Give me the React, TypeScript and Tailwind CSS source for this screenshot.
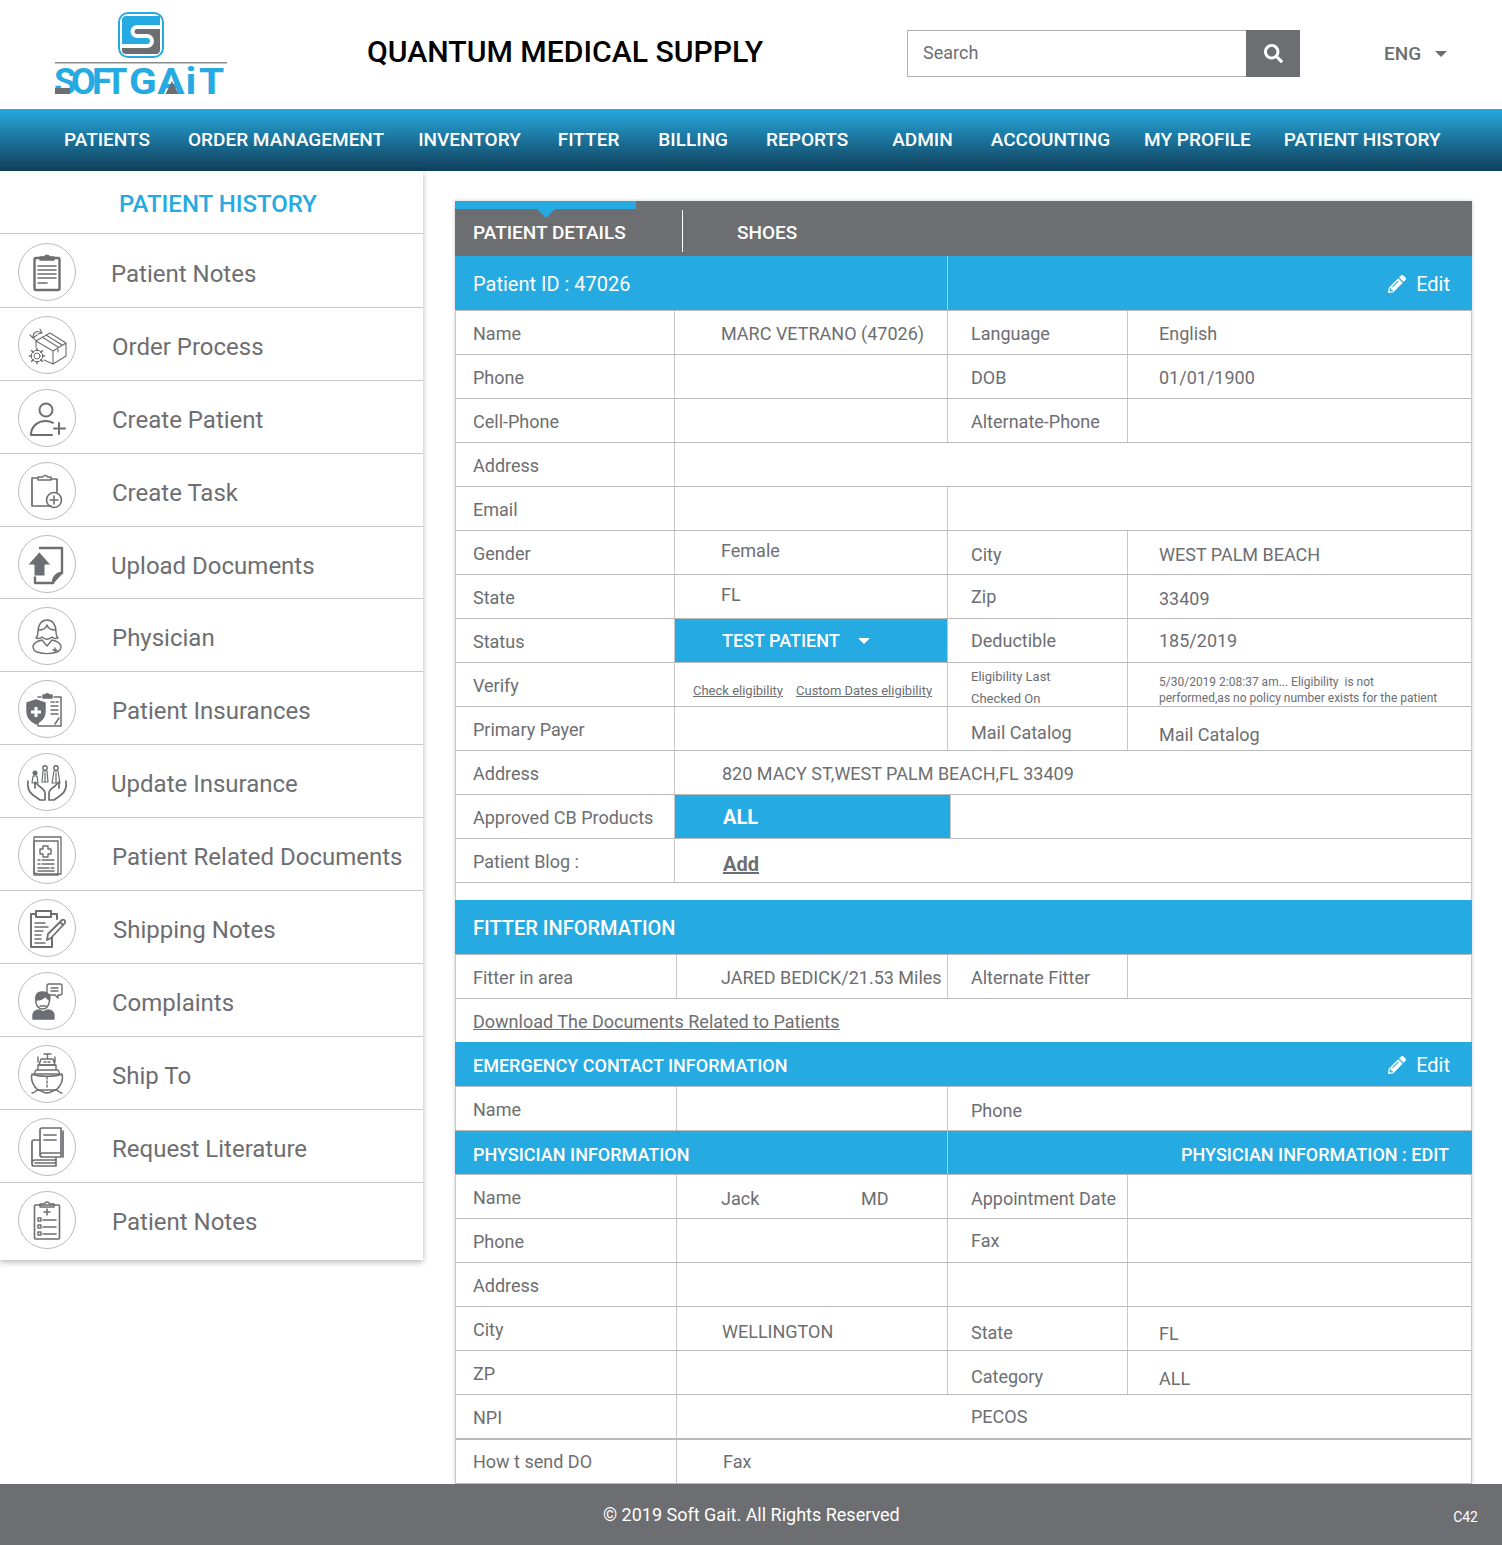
import React from "react";
import { FaSearch, FaPencilAlt } from "react-icons/fa";

const G = "#6d6e71";

function Ico({ children }: { children: React.ReactNode }) {
  return (
    <svg viewBox="0 0 58 58" className="w-[58px] h-[58px] shrink-0 -m-px" fill="none" stroke={G} strokeWidth="1.4" strokeLinejoin="round" strokeLinecap="round">
      {children}
    </svg>
  );
}

const icons: React.ReactNode[] = [
  <Ico>
    <rect x="16.5" y="15" width="25" height="32" rx="1.5" strokeWidth="2.4" />
    <path d="M22 17v-3h4.5a2.6 2.6 0 0 1 5 0H36v3z" fill={G} />
    <path d="M20 23h18M20 27h18M20 31h18M20 35h18M20 40h9" strokeWidth="1.6" />
  </Ico>,
  <Ico>
    <path d="M18 25l14-8 16 10-13 8zM18 25v6M35 35v13l13-8V27M24 21l16 10v5M28 19l16 10M26 44l9 4" strokeWidth="1.1" />
    <path d="M23 17c-3-3-8-1-8 4l3 4M15 22l-3-3M15 22l4-3M22 13l2 4-4 1" strokeWidth="1.1" />
    <circle cx="19" cy="40" r="3" strokeWidth="1" fill="#fff" />
    <path d="M19 32.500v2M19 45.500v2M11.500 40h2M24.500 40h2M13.700 34.700l1.500 1.500M22.800 43.800l1.500 1.500M24.300 34.700l-1.500 1.500M15.200 43.800l-1.500 1.500" strokeWidth="1.6" />
    <circle cx="19" cy="40" r="5.800" strokeWidth="1" />
  </Ico>,
  <Ico>
    <circle cx="28" cy="21" r="6.500" strokeWidth="2" />
    <path d="M13 46c0-9 7-14 15-14 3 0 5 .6 7 1.800M13 46h21M41 34v11M36 39.500h11" strokeWidth="2" />
  </Ico>,
  <Ico>
    <path d="M20 16h-6v28h19M33 17h6v13" strokeWidth="1.700" />
    <path d="M20 18v-3h5a2.400 2.400 0 0 1 4.500 0H33v3z" />
    <circle cx="36" cy="38" r="7.500" strokeWidth="1.600" />
    <path d="M36 34v8M32 38h8" strokeWidth="1.600" />
  </Ico>,
  <Ico>
    <path d="M22 13h22v25c-5 0-9 4-9 10H17v-7" strokeWidth="2.400" />
    <path d="M44 38l-9 10c0-5 3-9 9-10z" fill={G} />
    <path d="M21.500 17L33 30h-6v11H16V30h-6z" fill={G} stroke="#fff" strokeWidth="1" />
  </Ico>,
  <Ico>
    <path d="M20 25c0-8 4-12 9-12s9 4 9 12c0 3 1 5 2 6-3 1-5 0-6-1-3 3-7 3-10 0-1 1-3 2-6 1 1-1 2-3 2-6z" />
    <path d="M21 23c4 0 7-2 8-5 1 3 4 5 8 5" />
    <path d="M24 33c-5 1-8 3-9 6 0 3 1 5 4 6 6 2 14 2 20 0 3-1 4-3 4-6-1-3-4-5-9-6l-5 6z" />
    <path d="M37 41v4M35 43h4" />
  </Ico>,
  <Ico>
    <path d="M23 17h-3M36 17h7v29H20v-4M41 38l-4 6M38 22h2M33 22h3M33 26h7M33 30h7M33 34h7" strokeWidth="1.500" />
    <path d="M25 18v-3h2.500a1.800 1.800 0 0 1 3.500 0H34v3z" fill={G} />
    <path d="M18 20l9 3v9c0 6-4 9-9 12-5-3-9-6-9-12v-9z" fill={G} />
    <path d="M18 27v10M13 32h10" stroke="#fff" strokeWidth="3" strokeLinecap="butt" />
  </Ico>,
  <Ico>
    <path d="M10 28c-1 7 1 11 5 14l7 5h5v-7c0-3-3-5-6-7l-4-4v6M48 28c1 7-1 11-5 14l-7 5h-5v-7c0-3 3-5 6-7l4-4v6" strokeWidth="1.700" />
    <circle cx="17" cy="20" r="1.800" fill={G} /><circle cx="27" cy="15" r="2.200" /><circle cx="38" cy="15" r="2.200" />
    <path d="M14 30l1-7h4l1 7zM24 29l1-11h4l1 11zM34 30l2-12h4l2 12zM27 20v9M38 20v10" strokeWidth="1.200" />
  </Ico>,
  <Ico>
    <path d="M16 17V11h27v37H20l-4-1z" strokeWidth="1.300" />
    <rect x="16" y="15" width="24" height="34" strokeWidth="1.400" />
    <path d="M25 20h5v3h3v5h-3v3h-5v-3h-3v-5h3z" />
    <path d="M20 34h2M24 34h12M20 38h2M24 38h12M20 42h11M33 42h3M20 45h16" strokeWidth="1.400" />
  </Ico>,
  <Ico>
    <path d="M34 35v13H13V15h26v5" strokeWidth="2" />
    <rect x="18" y="12" width="15" height="6" strokeWidth="2" fill="#fff" />
    <path d="M17 24h10M17 28h13M17 32h8M17 36h6M17 40h6M17 44h10" strokeWidth="1.500" />
    <path d="M29 41l1-6 14-14c2-1 4 1 3 3L33 39zM42 23l3 3" strokeWidth="1.800" fill="#fff" />
  </Ico>,
  <Ico>
    <path d="M18 31c-1-7 3-10 7-10 5 0 8 4 6 10-1 4-3 6-6 6-4 0-6-2-7-6z" />
    <path d="M18 28c3 0 7-1 9-4 1 2 3 3 4 4l1-3c-1-3-4-5-8-5-5 0-7 4-6 8z" fill={G} />
    <path d="M22 34h6" />
    <path d="M15 47v-4c0-3 3-5 6-5l4 2 5-2c3 0 6 2 6 5v4z" fill={G} />
    <path d="M31 12h11a2 2 0 0 1 2 2v7a2 2 0 0 1-2 2h-2v3l-3-3h-6a2 2 0 0 1-2-2v-7a2 2 0 0 1 2-2zM33 16h7M33 19h7" />
  </Ico>,
  <Ico>
    <path d="M26 9h7M29.500 9v5M20 12v5M37 12v5M23 14h12l2 6H21zM26 17h2M30 17h2" />
    <path d="M20 20h18v5H20zM18 25h22l2 4H16z" />
    <path d="M14 29c6 3 24 3 30 0 2 6-2 13-6 16H20c-4-3-8-10-6-16zM29 32v2M29 36v2M29 40v2" />
    <path d="M14 48c3 0 4-3 6-3 3 0 4 3 9 3s6-3 9-3c2 0 3 3 6 3" />
  </Ico>,
  <Ico>
    <path d="M22 37V12a2 2 0 0 1 2-2h19v29H25c-2 0-3-1-3-2zM22 37c0-1 1-2 3-2h18M26 17h12M26 22h12M45 13v26" strokeWidth="1.700" />
    <path d="M22 22h-6c-1 0-2 1-2 2v22c0 1 1 2 2 2h22v-8M14 45c0-1 1-3 3-3h20M17 45h20M38 42v-2" strokeWidth="1.700" />
  </Ico>,
  <Ico>
    <rect x="16.500" y="14" width="25" height="34" rx="1" strokeWidth="1.600" />
    <path d="M22 16v-3h4.500a2.600 2.600 0 0 1 5 0H36v3zM29 18v6M26 21h6" strokeWidth="1.500" />
    <rect x="20" y="27" width="3" height="3" /><rect x="20" y="34" width="3" height="3" /><rect x="20" y="41" width="3" height="3" />
    <path d="M25 29h13M25 36h13M25 43h13" strokeWidth="1.500" />
  </Ico>,
];

const side: [string, string][] = [
  ["Patient Notes", "ml-[35px]"],
  ["Order Process", "ml-[36px]"],
  ["Create Patient", "ml-[36px]"],
  ["Create Task", "ml-[36px]"],
  ["Upload Documents", "ml-[35px]"],
  ["Physician", "ml-[36px]"],
  ["Patient Insurances", "ml-[36px]"],
  ["Update Insurance", "ml-[35px]"],
  ["Patient Related Documents", "ml-[36px]"],
  ["Shipping Notes", "ml-[37px]"],
  ["Complaints", "ml-[36px]"],
  ["Ship To", "ml-[36px]"],
  ["Request Literature", "ml-[36px]"],
  ["Patient Notes", "ml-[36px]"],
];

const nav: [string, string][] = [
  ["PATIENTS", "ml-[64px]"],
  ["ORDER MANAGEMENT", "ml-[38px]"],
  ["INVENTORY", "ml-[34px]"],
  ["FITTER", "ml-[37px]"],
  ["BILLING", "ml-[39px]"],
  ["REPORTS", "ml-[38px]"],
  ["ADMIN", "ml-[44px]"],
  ["ACCOUNTING", "ml-[38px]"],
  ["MY PROFILE", "ml-[34px]"],
  ["PATIENT HISTORY", "ml-[33px]"],
];

function Logo() {
  return (
    <svg viewBox="50 5 180 92" className="w-[180px] h-[92px] shrink-0" fontFamily="Roboto, sans-serif" fontWeight="700" fontSize="36">
      <rect x="119" y="13" width="44" height="44" rx="9" fill="#fff" stroke="#25aae1" strokeWidth="2" />
      <path d="M122 20a4 4 0 0 1 4-4h34v11h-23a4.500 4.500 0 0 0 0 9h10a5 5 0 0 1 0 10h-25z" fill="#25aae1" />
      <path d="M160 27v23a4 4 0 0 1-4 4h-30a4 4 0 0 1-4-4v-4h25a5 5 0 0 0 0-10h-10a4.500 4.500 0 0 1 0-9z" fill={G} />
      <path d="M160 27h-23a4.500 4.500 0 0 0 0 9h10a5 5 0 0 1 0 10h-25" fill="none" stroke="#fff" strokeWidth="4" />
      <rect x="55" y="62" width="172" height="1.500" fill="#8a8b8d" />
      <text x="54 71 92 105" y="94" fill="#25aae1">SOFT</text>
      <text transform="translate(129 94) scale(1.13 1)" x="0 25 50 62" y="0" fill="#25aae1">GAiT</text>
      <rect x="55" y="88" width="15" height="6" fill={G} />
      <path d="M172 81l6.500 13h-13z" fill={G} />
    </svg>
  );
}

type Cell = { t?: React.ReactNode; w?: string; c?: string };

function Row({ cells, last = false }: { cells: Cell[]; last?: boolean }) {
  return (
    <div className={`flex shrink-0 border-[#bababa] ${last ? "h-[46px] border-t-2 border-b" : "h-[44px] border-t"}`}>
      {cells.map((x, i) => (
        <div
          key={i}
          className={`flex min-w-0 whitespace-nowrap ${x.w ?? "flex-1"} ${i < cells.length - 1 ? "border-r border-[#c8c8c8]" : ""} ${x.c ?? ""}`}
        >
          <div className="flex items-center w-full h-full pb-[2px]">{x.t}</div>
        </div>
      ))}
    </div>
  );
}

const A = "w-[219px] pl-[17px] pt-[4px]";
const B = "w-[273px] pl-[46px]";
const C = "w-[180px] pl-[23px]";
const D = "flex-1 pl-[31px]";
const A2 = "w-[221px] pl-[17px] pt-[4px]";
const B2 = "w-[271px] pl-[44px]";

function R4({ a, b, c, d, bc = "pt-[4px]", cc = "pt-[4px]", dc = "pt-[4px]", two }: { a?: React.ReactNode; b?: React.ReactNode; c?: React.ReactNode; d?: React.ReactNode; bc?: string; cc?: string; dc?: string; two?: boolean }) {
  return (
    <Row
      cells={[
        { t: a, w: two ? A2 : A },
        { t: b, w: two ? B2 : B, c: bc },
        { t: c, w: C, c: cc },
        { t: d, w: D, c: dc },
      ]}
    />
  );
}

function Caret({ c }: { c: string }) {
  return <span className={`inline-block w-0 h-0 border-x-[6px] border-x-transparent border-t-[6px] ${c}`} />;
}

function Edit() {
  return (
    <span className="flex items-center gap-[10px] text-[20px] font-normal">
      <FaPencilAlt className="w-[18px] h-[18px]" />
      Edit
    </span>
  );
}

export default function App() {
  return (
    <div className="w-[1502px] h-[1545px] bg-white flex flex-col overflow-hidden font-['Roboto',sans-serif] text-[18px] text-[#6d6e71]">
      <header className="h-[109px] flex items-start pl-[50px] pt-[5px] shrink-0">
        <Logo />
        <h1 className="ml-[137px] mt-[27px] w-[540px] text-[30.2px] leading-[40px] font-medium text-black whitespace-nowrap">QUANTUM MEDICAL SUPPLY</h1>
        <div className="mt-[25px] flex h-[47px] w-[393px]">
          <div className="flex-1 border border-[#b0b0b0] border-r-0 pl-[15px] flex items-center text-[18px] pb-[2px]">Search</div>
          <div className="w-[54px] bg-[#6d6e71] flex items-center justify-center text-white">
            <FaSearch className="w-[19px] h-[19px]" />
          </div>
        </div>
        <div className="ml-[84px] mt-[37px] flex items-center gap-[14px] text-[19px] font-medium leading-[24px]">
          ENG
          <Caret c="border-t-[#6d6e71]" />
        </div>
      </header>

      <nav className="h-[62px] shrink-0 flex items-center bg-gradient-to-b from-[#25aae1] to-[#10405a] text-white text-[19px] font-medium whitespace-nowrap">
        {nav.map(([t, m]) => (
          <span key={t} className={m}>{t}</span>
        ))}
      </nav>

      <div className="flex-1 flex min-h-0">
        <aside className="w-[423px] h-[1089px] shrink-0 bg-white shadow-[0_2px_6px_rgba(0,0,0,0.3)]">
          <div className="h-[63px] border-b border-[#c8c8c8] flex items-center justify-center pt-[4px] pl-[13px] text-[24px] font-medium text-[#25aae1]">PATIENT HISTORY</div>
          {side.map(([t, m], i) => (
            <div
              key={i}
              className={`flex items-center border-[#c8c8c8] pl-[18px] ${i === 13 ? "h-[77px] pb-[3px]" : i === 0 ? "h-[74px] pt-[3px] border-b" : i === 4 ? "h-[72px] pt-[2px] border-b" : "h-[73px] pt-[2px] border-b"}`}
            >
              <div className="w-[58px] h-[58px] shrink-0 rounded-full border border-[#bcbcbc] flex items-center justify-center">{icons[i]}</div>
              <span className={`${m} text-[24px] pt-[4px] whitespace-nowrap`}>{t}</span>
            </div>
          ))}
        </aside>

        <main className="ml-[32px] mt-[30px] w-[1017px] h-[1283px] shadow-[0_0_4px_rgba(0,0,0,0.2)] flex flex-col">
          <div className="h-[55px] bg-[#6d6e71] text-white text-[19px] font-medium shrink-0">
            <div className="relative w-[181px] h-[8px] bg-[#25aae1]">
              <span className="absolute left-[82px] top-[8px] w-0 h-0 border-x-[9px] border-x-transparent border-t-[9px] border-t-[#25aae1]" />
            </div>
            <div className="flex h-[43px] items-center">
              <span className="w-[228px] pl-[18px] h-[42px] flex items-center pt-[5px] border-r border-white">PATIENT DETAILS</span>
              <span className="ml-[54px] pt-[5px]">SHOES</span>
            </div>
          </div>

          <div className="flex-1 border-x border-[#c8c8c8] flex flex-col">
            <div className="h-[54px] shrink-0 -mx-px bg-[#25aae1] text-white flex text-[20px]">
              <div className="w-[493px] pl-[18px] pt-[1px] flex items-center border-r border-[#9fd4ee]">Patient ID : 47026</div>
              <div className="flex-1 flex items-center justify-end pr-[22px] pt-[1px]"><Edit /></div>
            </div>

            <R4 a="Name" b="MARC VETRANO (47026)" c="Language" d="English" />
            <R4 a="Phone" c="DOB" d="01/01/1900" />
            <R4 a="Cell-Phone" c="Alternate-Phone" />
            <Row cells={[{ t: "Address", w: A }, {}]} />
            <Row cells={[{ t: "Email", w: A }, { w: "w-[273px]" }, {}]} />
            <R4 a="Gender" b="Female" c="City" d="WEST PALM BEACH" bc="pb-[2px]" cc="pt-[6px]" dc="pt-[6px]" />
            <R4 a="State" b="FL" c="Zip" d="33409" bc="pb-[2px]" cc="pt-[2px]" dc="pt-[6px]" />
            <Row
              cells={[
                { t: "Status", w: A },
                {
                  t: (
                    <span className="flex items-center gap-[18px] font-medium text-white">
                      TEST PATIENT <Caret c="border-t-white" />
                    </span>
                  ),
                  w: "w-[273px] pl-[47px] pt-[2px] bg-[#25aae1]",
                },
                { t: "Deductible", w: "w-[180px] pl-[23px] pt-[2px]" },
                { t: "185/2019", w: "flex-1 pl-[31px] pt-[2px]" },
              ]}
            />
            <Row
              cells={[
                { t: "Verify", w: A },
                {
                  t: (
                    <span className="flex gap-[13px] text-[13px] underline mt-[14px]">
                      <span>Check eligibility</span>
                      <span>Custom Dates eligibility</span>
                    </span>
                  ),
                  w: "w-[273px] pl-[18px]",
                },
                {
                  t: (
                    <span className="block text-[13px] leading-[22px] whitespace-normal pt-[8px]">
                      Eligibility Last
                      <br />
                      Checked On
                    </span>
                  ),
                  w: "w-[180px] pl-[23px]",
                },
                {
                  t: (
                    <span className="block text-[12px] leading-[16px] whitespace-nowrap pt-[13px]">
                      5/30/2019 2:08:37 am... Eligibility&nbsp; is not
                      <br />
                      performed,as no policy number exists for the patient
                    </span>
                  ),
                  w: "flex-1 pl-[31px]",
                },
              ]}
            />
            <Row
              cells={[
                { t: "Primary Payer", w: A },
                { w: "w-[273px]" },
                { t: "Mail Catalog", w: "w-[180px] pl-[23px] pt-[10px]" },
                { t: "Mail Catalog", w: "flex-1 pl-[31px] pt-[13px]" },
              ]}
            />
            <Row cells={[{ t: "Address", w: A }, { t: "820 MACY ST,WEST PALM BEACH,FL 33409", w: "flex-1 pl-[47px] pt-[4px]" }]} />
            <Row
              cells={[
                { t: "Approved CB Products", w: A },
                { t: "ALL", w: "w-[276px] pl-[48px] pt-[2px] bg-[#25aae1] text-white font-bold text-[20px]" },
                {},
              ]}
            />
            <Row
              cells={[
                { t: "Patient Blog :", w: A },
                { t: <span className="underline font-bold text-[20px]">Add</span>, w: "flex-1 pl-[48px] pt-[9px]" },
              ]}
            />

            <div className="h-[18px] shrink-0 border-t border-[#bababa]" />

            <div className="h-[54px] -mx-px bg-[#25aae1] text-white flex items-center pl-[18px] pt-[2px] text-[20px] font-medium shrink-0">FITTER INFORMATION</div>
            <R4 two a="Fitter in area" b="JARED BEDICK/21.53 Miles" c="Alternate Fitter" />
            <Row cells={[{ t: <span className="underline">Download The Documents Related to Patients</span>, c: "pl-[17px] pt-[4px]" }]} />
            <div className="h-[44px] -mx-px bg-[#25aae1] text-white flex items-center justify-between pl-[18px] pr-[22px] pt-[2px] text-[18px] font-medium shrink-0">
              EMERGENCY CONTACT INFORMATION
              <Edit />
            </div>
            <Row cells={[{ t: "Name", w: A2 }, { w: "w-[271px]" }, { t: "Phone", c: "pl-[23px] pt-[5px]" }]} />
            <div className="h-[44px] -mx-px bg-[#25aae1] text-white flex text-[18px] font-medium border-t border-[#bababa] shrink-0">
              <div className="w-[493px] pl-[18px] pt-[3px] flex items-center border-r border-[#9fd4ee]">PHYSICIAN INFORMATION</div>
              <div className="flex-1 flex items-center justify-end pr-[23px] pt-[4px]">PHYSICIAN INFORMATION : EDIT</div>
            </div>
            <R4
              two
              a="Name"
              b={
                <span className="flex w-full">
                  <span className="w-[140px]">Jack</span>
                  <span>MD</span>
                </span>
              }
              c="Appointment Date"
              bc="pt-[6px]"
              cc="pt-[6px]"
            />
            <R4 two a="Phone" c="Fax" cc="pt-[2px]" />
            <R4 two a="Address" />
            <R4 two a="City" b={<span className="pl-[1px]">WELLINGTON</span>} c="State" d="FL" bc="pt-[7px]" cc="pt-[10px]" dc="pt-[12px]" />
            <R4 two a="ZP" c="Category" d="ALL" cc="pt-[10px]" dc="pt-[14px]" />
            <Row cells={[{ t: "NPI", w: A2 }, { t: "PECOS", c: "pl-[294px] pt-[2px]" }]} />
            <Row last cells={[{ t: "How t send DO", w: "w-[221px] pl-[17px] pt-[2px]" }, { t: "Fax", c: "pl-[46px] pt-[2px]" }]} />
          </div>
        </main>
      </div>

      <footer className="h-[61px] shrink-0 bg-[#6d6e71] text-white flex items-center justify-between pl-[603px] pr-[24px]">
        <span className="text-[18px]">© 2019 Soft Gait. All Rights Reserved</span>
        <span className="text-[14px] pt-[6px]">C42</span>
      </footer>
    </div>
  );
}
